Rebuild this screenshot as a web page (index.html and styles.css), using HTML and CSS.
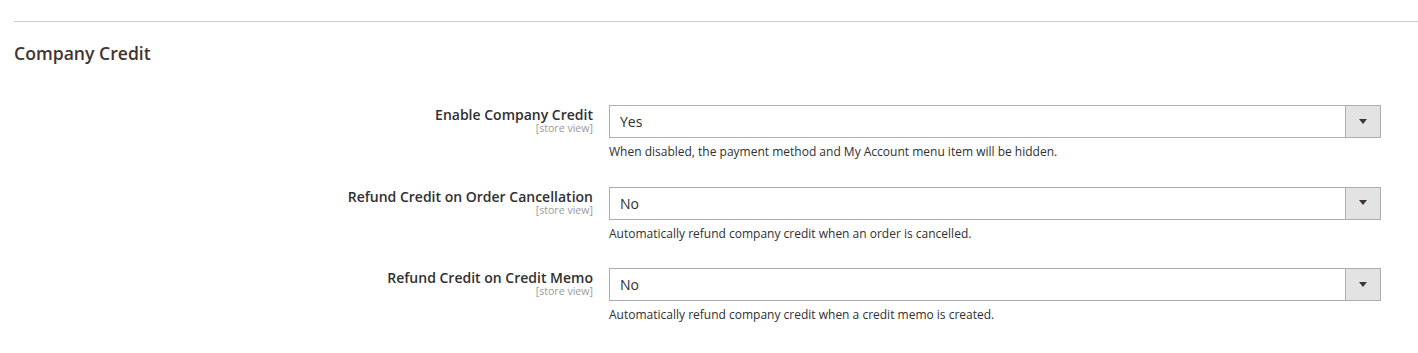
FILE: index.html
```html
<!DOCTYPE html>
<html>
<head>
<meta charset="utf-8">
<link rel="stylesheet" href="styles.css">
</head>
<body>
<div class="section">
  <h2 class="section-title">Company Credit</h2>
  <div class="fields">
    <div class="field-row">
      <div class="label">
        <div class="label-text">Enable Company Credit</div>
        <div class="scope">[store view]</div>
      </div>
      <div class="control">
        <div class="select">
          <span class="select-value">Yes</span>
          <span class="select-btn"><svg width="8" height="5" viewBox="0 0 8 5"><path d="M0 0H8L4 5Z" fill="#41362f"/></svg></span>
        </div>
        <div class="note">When disabled, the payment method and My Account menu item will be hidden.</div>
      </div>
    </div>
    <div class="field-row">
      <div class="label">
        <div class="label-text">Refund Credit on Order Cancellation</div>
        <div class="scope">[store view]</div>
      </div>
      <div class="control">
        <div class="select">
          <span class="select-value">No</span>
          <span class="select-btn"><svg width="8" height="5" viewBox="0 0 8 5"><path d="M0 0H8L4 5Z" fill="#41362f"/></svg></span>
        </div>
        <div class="note">Automatically refund company credit when an order is cancelled.</div>
      </div>
    </div>
    <div class="field-row">
      <div class="label">
        <div class="label-text">Refund Credit on Credit Memo</div>
        <div class="scope">[store view]</div>
      </div>
      <div class="control">
        <div class="select">
          <span class="select-value">No</span>
          <span class="select-btn"><svg width="8" height="5" viewBox="0 0 8 5"><path d="M0 0H8L4 5Z" fill="#41362f"/></svg></span>
        </div>
        <div class="note">Automatically refund company credit when a credit memo is created.</div>
      </div>
    </div>
  </div>
</div>
</body>
</html>
```
FILE: styles.css
```css
html, body {
  margin: 0;
  padding: 0;
  background: #ffffff;
}
body {
  font-family: "Open Sans", "Liberation Sans", sans-serif;
  color: #303030;
}
.section {
  margin-top: 21px;
  margin-left: 14px;
  border-top: 1px solid #cccccc;
}
.section-title {
  margin: 0;
  padding-top: 21px;
  font-size: 17.6px;
  line-height: 20px;
  font-weight: 600;
  color: #41362f;
}
.fields {
  margin-top: 42px;
  margin-left: -14px;
}
.field-row {
  display: grid;
  grid-template-columns: 593px 772px;
  column-gap: 16px;
  margin-bottom: 26.5px;
}
.label {
  text-align: right;
  padding-top: 2px;
}
.label-text {
  font-size: 14px;
  line-height: 16px;
  font-weight: 600;
  color: #303030;
}
.scope {
  font-size: 10.6px;
  line-height: 11px;
  color: #999999;
}
.control {
  display: flex;
  flex-direction: column;
}
.select {
  display: flex;
  height: 33px;
  box-sizing: border-box;
  border: 1px solid #adadad;
  background: #ffffff;
}
.select-value {
  flex: 1;
  padding-left: 10px;
  font-size: 14px;
  line-height: 31px;
  color: #303030;
}
.select-btn {
  width: 34px;
  border-left: 1px solid #adadad;
  background: #e3e3e3;
  display: flex;
  align-items: center;
  justify-content: center;
}
.select-btn svg {
  display: block;
  margin-top: -1px;
}
.note {
  margin-top: 6px;
  font-size: 12px;
  line-height: 16px;
  color: #303030;
}
```
